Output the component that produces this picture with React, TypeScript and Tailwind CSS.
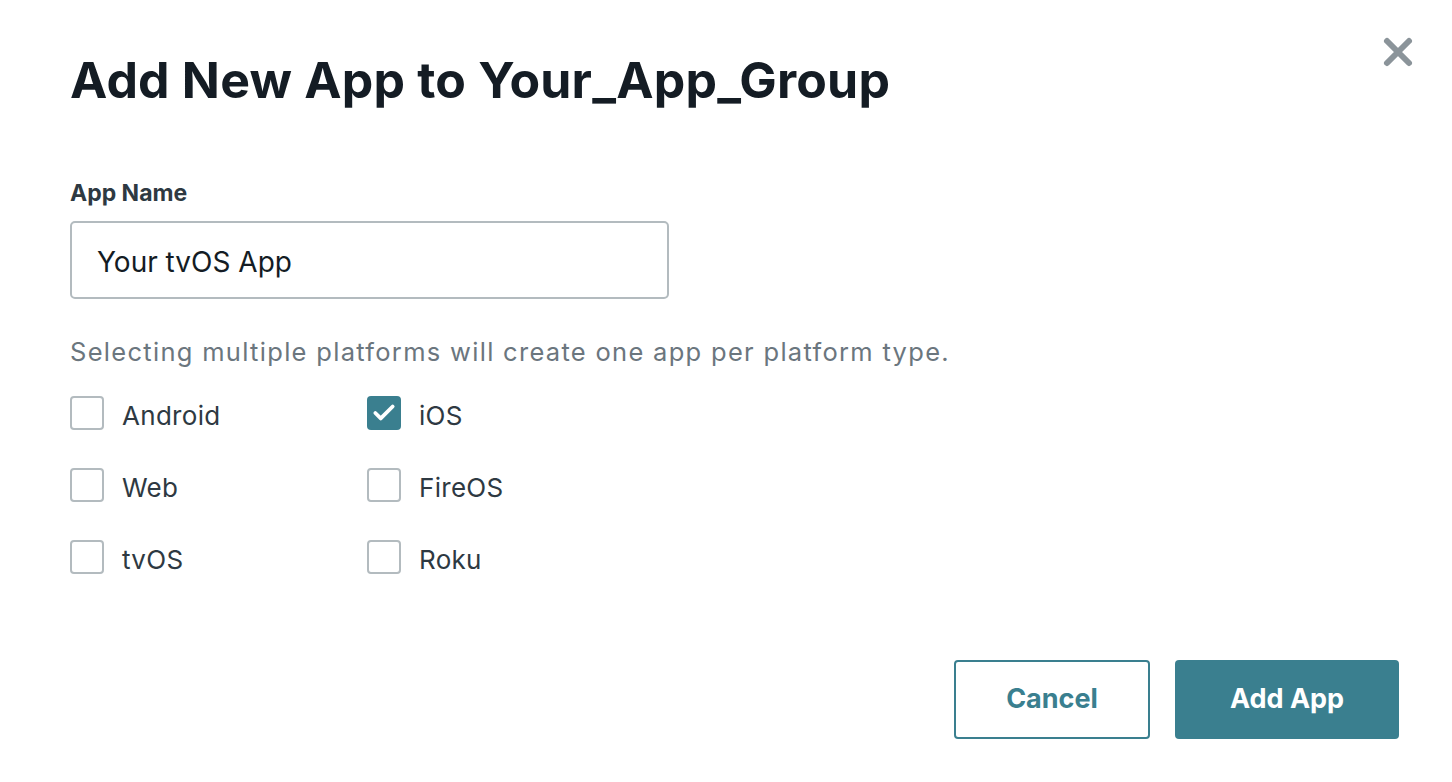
import { Check } from "lucide-react";

const platforms = [
  ["Android", "iOS"],
  ["Web", "FireOS"],
  ["tvOS", "Roku"],
];

function Box({ label, checked }: { label: string; checked?: boolean }) {
  return (
    <label className="flex items-center gap-[18px] h-[34px]">
      {checked ? (
        <span className="w-[34px] h-[34px] rounded-[4px] bg-[#3a7f8f] flex items-center justify-center">
          <Check className="w-[26px] h-[26px] text-white" strokeWidth={3.5} />
        </span>
      ) : (
        <span className="w-[34px] h-[34px] rounded-[4px] border-2 border-[#b3bbbf] bg-white" />
      )}
      <span className="text-[26px] text-[#2e3942] pt-[4px] tracking-[0.3px]">{label}</span>
    </label>
  );
}

export default function App() {
  return (
    <div
      className="w-[1452px] h-[782px] bg-white flex flex-col pl-[70px] pr-[53px] pt-[48px] pb-[43px]"
      style={{ fontFamily: "Inter, 'Noto Sans', sans-serif" }}
    >
      {/* Header */}
      <div className="flex items-start justify-between">
        <h1 className="text-[50px] leading-[64px] font-bold text-[#141c24] tracking-[0.2px]">
          Add New App to Your_App_Group
        </h1>
        <button className="mt-[-12px] mr-[-15px] text-[#8b949a]">
          <svg width="32" height="32" viewBox="0 0 32 32">
            <path d="M5 5 L27 27 M27 5 L5 27" stroke="currentColor" strokeWidth="6" strokeLinecap="round" />
          </svg>
        </button>
      </div>

      {/* App name */}
      <div className="mt-[66px] text-[23px] font-bold text-[#2e3942] leading-[30px]">App Name</div>
      <div className="mt-[13px] w-[599px] h-[78px] rounded-[5px] border-2 border-[#b3bbbf] flex items-center px-[25px] pt-[4px]">
        <span className="text-[28px] text-[#141c24]">Your tvOS App</span>
      </div>

      <p className="mt-[36px] text-[25.5px] text-[#6b767e] leading-[34px] tracking-[1.3px]">
        Selecting multiple platforms will create one app per platform type.
      </p>

      <div className="mt-[27px] flex flex-col gap-[38px]">
        {platforms.map((row) => (
          <div key={row[0]} className="flex">
            <div className="w-[297px]">
              <Box label={row[0]} />
            </div>
            <Box label={row[1]} checked={row[1] === "iOS"} />
          </div>
        ))}
      </div>

      {/* Footer */}
      <div className="mt-auto flex justify-end gap-[25px]">
        <button className="w-[196px] h-[79px] rounded-[4px] border-2 border-[#3a7f8f] text-[#3a7f8f] text-[27px] font-bold">
          Cancel
        </button>
        <button className="w-[224px] h-[79px] rounded-[4px] bg-[#3a7f8f] text-white text-[27px] font-bold">
          Add App
        </button>
      </div>
    </div>
  );
}
